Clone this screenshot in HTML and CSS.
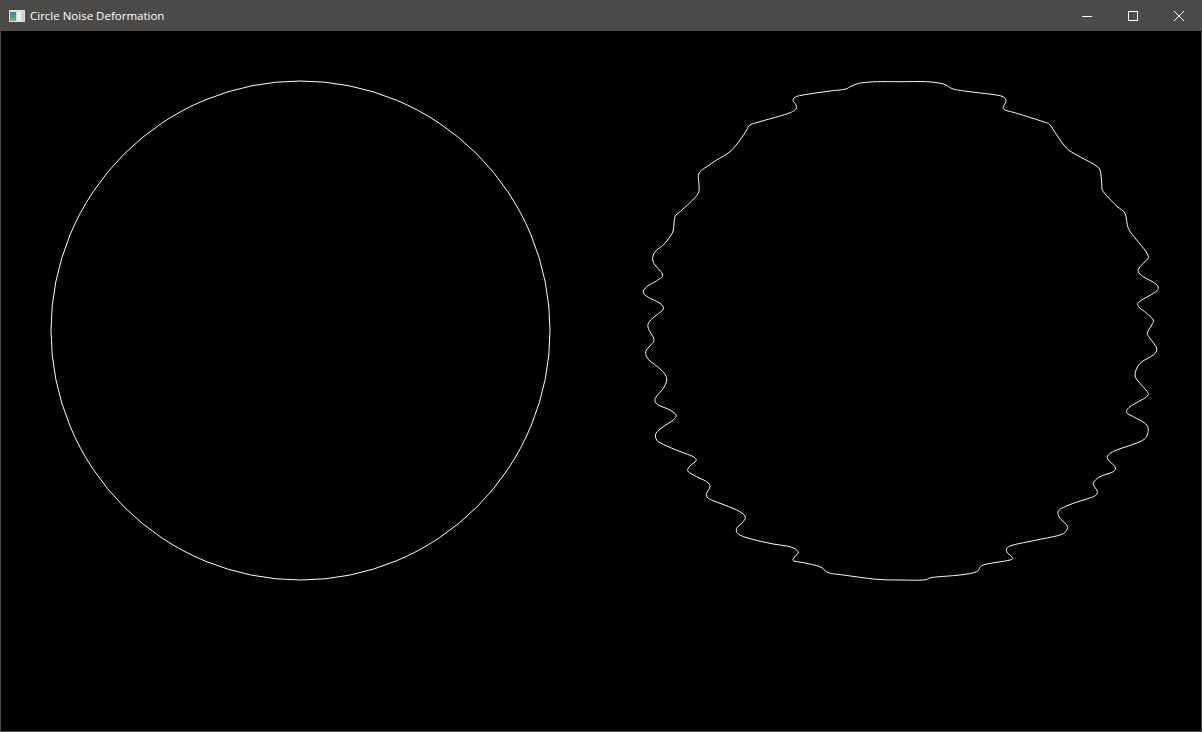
FILE: index.html
```html
<!DOCTYPE html>
<html>
<head>
<meta charset="utf-8">
<title>Circle Noise Deformation</title>
<link rel="stylesheet" href="styles.css">
</head>
<body>
<div class="window">
  <div class="titlebar">
    <div class="title-left">
      <svg class="app-icon" width="16" height="12" viewBox="0 0 16 12">
        <defs>
          <linearGradient id="g1" x1="0" y1="0" x2="0" y2="1">
            <stop offset="0" stop-color="#3a7fb0"/>
            <stop offset="0.5" stop-color="#4aa08a"/>
            <stop offset="1" stop-color="#6fb86a"/>
          </linearGradient>
        </defs>
        <rect x="0" y="0" width="16" height="12" fill="#dcdcdc"/>
        <rect x="1" y="2" width="6" height="9" fill="url(#g1)"/>
        <rect x="8" y="2" width="7" height="9" fill="#eef0f2"/>
        <rect x="12" y="2" width="3" height="9" fill="#c9d3dc"/>
      </svg>
      <span class="title-text">Circle Noise Deformation</span>
    </div>
    <div class="controls">
      <div class="ctrl">
        <svg width="12" height="12" viewBox="0 0 12 12"><path d="M1 6.5H11" stroke="#fff" stroke-width="1"/></svg>
      </div>
      <div class="ctrl">
        <svg width="12" height="12" viewBox="0 0 12 12"><rect x="1.5" y="1.5" width="9" height="9" fill="none" stroke="#fff" stroke-width="1"/></svg>
      </div>
      <div class="ctrl">
        <svg width="12" height="12" viewBox="0 0 12 12"><path d="M1 1L11 11M11 1L1 11" stroke="#fff" stroke-width="1"/></svg>
      </div>
    </div>
  </div>
  <div class="canvas">
    <svg class="drawing" width="1200" height="700" viewBox="1 31 1200 700">
      <circle cx="300.5" cy="330.5" r="249.5" fill="none" stroke="#fff" stroke-width="1"/>
      <path id="blob" fill="none" stroke="#fff" stroke-width="1" stroke-linejoin="round" data-points="
900,81.7 926.7,81.7 943.3,84 953.3,89 970,91.7 1000,95.7 1006,100.7 1003.3,106.7 1005,110 1016.7,113.3 1043.3,121.7 1050,125 1056.7,135 1066.7,148.3 1076.7,155 1093.3,164 1100,170 1101.7,183.3 1103.3,191.7 1116.7,206 1125,213.3 1128.3,228.3 1136.7,240 1145,250 1148.3,256.7 1146.7,260 1140,266.7 1138.3,271.7 1143.3,276.7 1155,283.3 1158.3,288.3 1153.3,293.3 1139.3,301.7 1138.7,306.7 1146.7,313.3 1153.3,320 1151.7,325 1147.3,333.3 1150,338.3 1156.7,348.3 1153.3,355 1140,363.3 1135,375 1140,383.3 1147.3,391.7 1146.7,396.7 1130,406.7 1126.7,412.7 1133.3,416.7 1146.7,425 1147.3,435 1140,441.7 1116.7,450 1108.3,455 1108.3,460 1115,466.7 1113.3,471.7 1100,476.7 1093.3,483.3 1097.3,491.7 1093.3,496.7 1073.3,503.3 1059.3,510 1059.3,517.3 1066.7,525 1066.7,530 1060,535 1033.3,540.7 1010,546 1006.7,551.7 1011.7,556.7 1010,560 983.3,565 976.7,571.7 960,575 933.3,577.3 923.3,580 900,580 876.7,579.3 843.3,575 828.3,572.7 820,566.7 803.3,562.7 793.3,560.7 795,556.7 798.3,551.7 790,546.7 773.3,544 750,538.7 738.3,534 736.7,528.3 743.3,521.7 745,516 736.7,510 720,503.3 708.3,498.3 706.7,493.3 710,486.7 706.7,481.7 693.3,475 687.7,470.7 690,466 696,460.7 693.3,456.7 680,451.5 663.3,444.5 656.7,440 656,433.3 663.3,426.7 673.3,420 676,415 670,410 658.3,405 655,400.7 656.7,396 663.3,388.3 666.7,380 664.3,373.3 656.7,366 648.3,359.3 645.7,351.7 650.7,345 654,339.3 648.3,328.3 649.3,321.7 656.7,315 663.3,309 660,303.3 648.3,297.3 643.3,292.3 646.7,286.7 656.7,280.7 662.7,275 655,265 652.7,260 653.3,255 656.7,250 663.3,245 670,236.7 673.3,230 675,216.7 680,211.7 690,202.7 698.3,193.3 699,185 698.3,176.7 700,171.7 706.7,166.7 716.7,160 730,151.7 740,140 746.7,130 750,125 763.3,120.7 786.7,114 795.7,109.3 795.7,104.3 793,100.7 795,97.3 803,95 830,91 845,89.3 850,86.7 856.7,84 863,82.7 876.7,81.7"/>
    </svg>
  </div>
</div>
<script src="script.js"></script>
</body>
</html>
```

FILE: styles.css
```css
html, body {
  margin: 0;
  padding: 0;
  background: #000;
}

.window {
  width: 1202px;
  height: 732px;
  box-sizing: border-box;
  border: 1px solid #4e4d4b;
  border-top: none;
  display: flex;
  flex-direction: column;
  overflow: hidden;
  background: #000;
}

.titlebar {
  height: 31px;
  flex: 0 0 31px;
  background: #4b4a48;
  display: flex;
  align-items: center;
  justify-content: space-between;
  margin: 0 -1px;
}

.title-left {
  display: flex;
  align-items: center;
  padding-left: 9px;
  gap: 5px;
}

.app-icon {
  display: block;
}

.title-text {
  color: #ffffff;
  font-family: "Open Sans", "Noto Sans", "Liberation Sans", sans-serif;
  font-size: 11.5px;
}

.controls {
  display: flex;
  height: 31px;
}

.ctrl {
  width: 46px;
  height: 31px;
  display: flex;
  align-items: center;
  justify-content: center;
}

.ctrl svg {
  display: block;
}

.canvas {
  flex: 1;
  background: #000;
}

.drawing {
  display: block;
}
```

FILE: script.js
```js
(function () {
  var el = document.getElementById('blob');
  var pts = el.getAttribute('data-points').trim().split(/\s+/).map(function (p) {
    var a = p.split(',');
    return [parseFloat(a[0]), parseFloat(a[1])];
  });
  var n = pts.length;
  var d = 'M' + pts[0][0] + ' ' + pts[0][1];
  for (var i = 0; i < n; i++) {
    var p0 = pts[(i - 1 + n) % n], p1 = pts[i], p2 = pts[(i + 1) % n], p3 = pts[(i + 2) % n];
    var c1x = p1[0] + (p2[0] - p0[0]) / 6, c1y = p1[1] + (p2[1] - p0[1]) / 6;
    var c2x = p2[0] - (p3[0] - p1[0]) / 6, c2y = p2[1] - (p3[1] - p1[1]) / 6;
    d += ' C' + c1x.toFixed(2) + ' ' + c1y.toFixed(2) + ' ' + c2x.toFixed(2) + ' ' + c2y.toFixed(2) + ' ' + p2[0] + ' ' + p2[1];
  }
  el.setAttribute('d', d + 'Z');
})();
```
